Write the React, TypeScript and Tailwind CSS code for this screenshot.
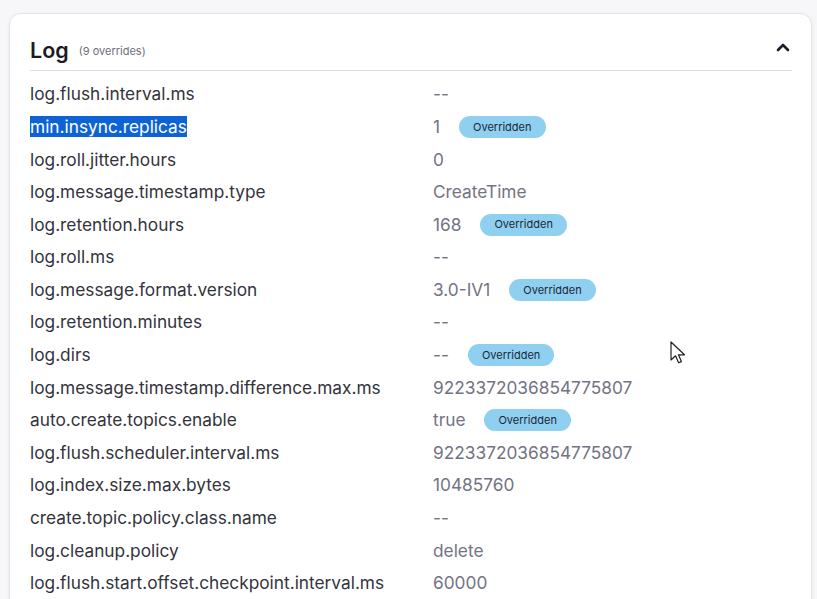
import React from "react";

const rows: { name: string; value: string; overridden?: boolean; selected?: boolean }[] = [
  { name: "log.flush.interval.ms", value: "--" },
  { name: "min.insync.replicas", value: "1", overridden: true, selected: true },
  { name: "log.roll.jitter.hours", value: "0" },
  { name: "log.message.timestamp.type", value: "CreateTime" },
  { name: "log.retention.hours", value: "168", overridden: true },
  { name: "log.roll.ms", value: "--" },
  { name: "log.message.format.version", value: "3.0-IV1", overridden: true },
  { name: "log.retention.minutes", value: "--" },
  { name: "log.dirs", value: "--", overridden: true },
  { name: "log.message.timestamp.difference.max.ms", value: "9223372036854775807" },
  { name: "auto.create.topics.enable", value: "true", overridden: true },
  { name: "log.flush.scheduler.interval.ms", value: "9223372036854775807" },
  { name: "log.index.size.max.bytes", value: "10485760" },
  { name: "create.topic.policy.class.name", value: "--" },
  { name: "log.cleanup.policy", value: "delete" },
  { name: "log.flush.start.offset.checkpoint.interval.ms", value: "60000" },
];

export default function App() {
  return (
    <div
      className="w-[817px] h-[599px] overflow-hidden bg-[#f7f7f9] relative"
      style={{ fontFamily: "Inter, 'Noto Sans', sans-serif" }}
    >
      <div className="ml-[9px] mr-[5px] mt-[13px] h-[640px] bg-white border border-[#e4e4e8] rounded-[12px] shadow-[0_1px_4px_rgba(0,0,0,0.06)] pl-[20px] pr-[19px]">
        <div className="h-[57px] border-b border-[#dedee2] flex items-end pb-[9px]">
          <span className="text-[21.5px] font-semibold text-[#1b1b24] leading-none">Log</span>
          <span className="ml-[10px] text-[11px] text-[#6e6e7c] leading-none mb-[4px]">(9 overrides)</span>
          <div className="flex-1" />
          <svg width="14" height="10" viewBox="0 0 14 10" className="mb-[9px] mr-[2px]">
            <path d="M2 8 L7 3 L12 8" stroke="#1b1b2e" strokeWidth="2.6" fill="none" strokeLinecap="round" strokeLinejoin="round" />
          </svg>
        </div>
        <div className="pt-[7px]">
          {rows.map((r) => (
            <div key={r.name} className="grid grid-cols-[403px_1fr] h-[32.6px] items-center text-[17.3px]">
              <div className="text-[#33333d]">
                {r.selected ? (
                  <span className="bg-[#0d63d6] text-white">{r.name}</span>
                ) : (
                  r.name
                )}
              </div>
              <div className="flex items-center text-[#737383]">
                <span>{r.value}</span>
                {r.overridden && (
                  <span className="ml-[19px] h-[22px] px-[14px] rounded-full bg-[#8fcff0] text-[#1c2838] text-[11px] flex items-center">
                    Overridden
                  </span>
                )}
              </div>
            </div>
          ))}
        </div>
      </div>
      <svg className="absolute left-[670px] top-[341px]" width="18" height="26" viewBox="0 0 18 26">
        <path
          d="M1 1 L1 19 L5.5 14.8 L8.6 21.8 L11.4 20.6 L8.4 13.8 L14.5 13.8 Z"
          fill="white"
          stroke="#222"
          strokeWidth="1.2"
          strokeLinejoin="round"
        />
      </svg>
    </div>
  );
}
